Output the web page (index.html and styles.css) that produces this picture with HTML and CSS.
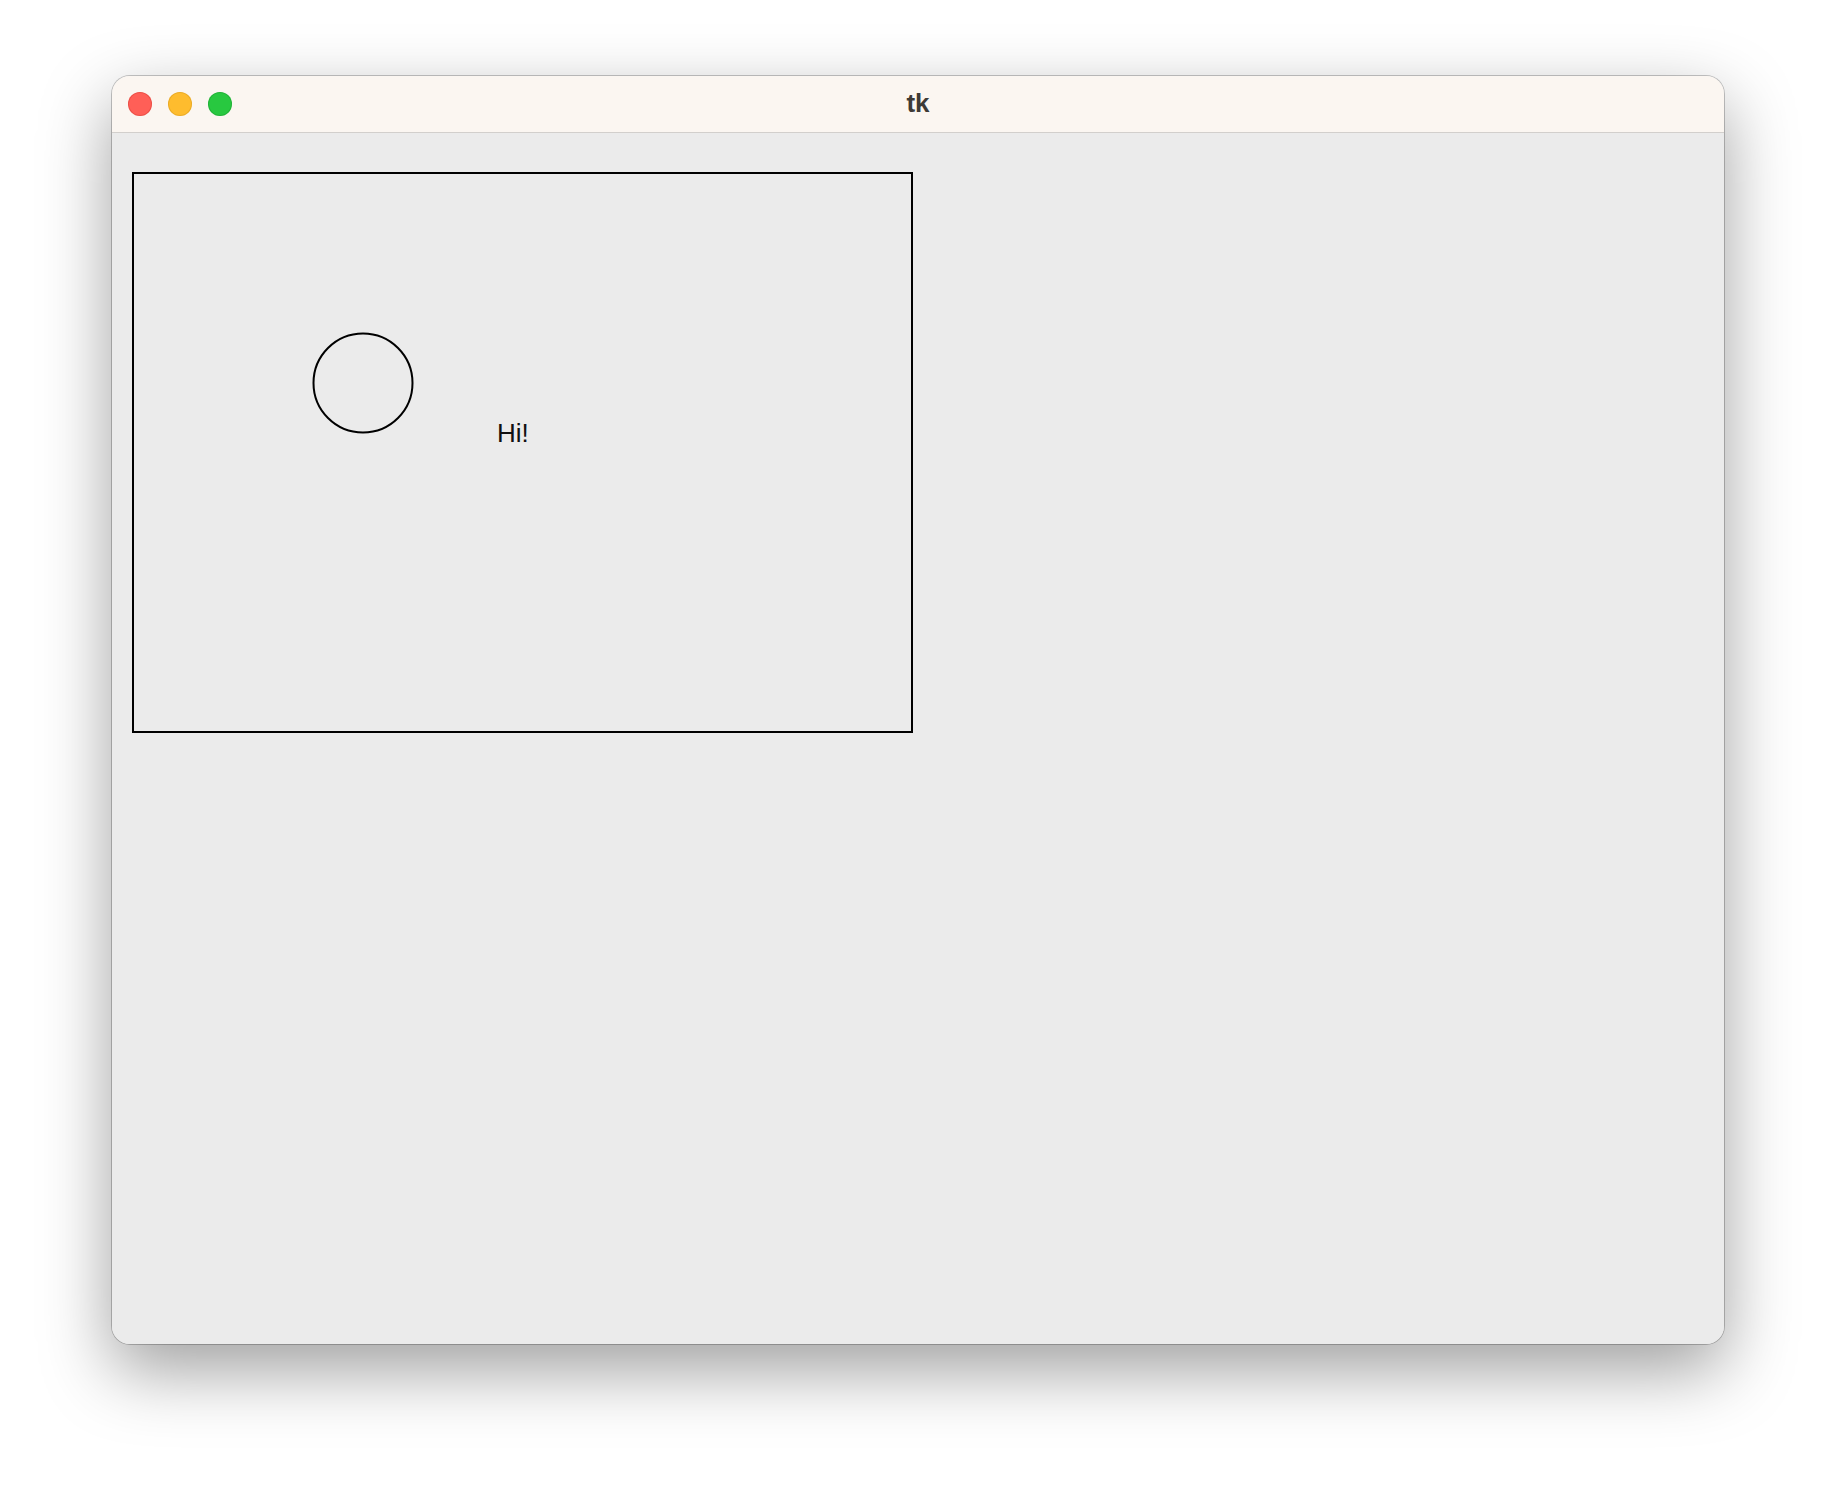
FILE: index.html
```html
<!DOCTYPE html>
<html lang="en">
<head>
<meta charset="utf-8">
<title>tk</title>
<link rel="stylesheet" href="styles.css">
</head>
<body>
<div class="window">
  <div class="titlebar">
    <div class="lights">
      <span class="light red"></span>
      <span class="light yellow"></span>
      <span class="light green"></span>
    </div>
    <div class="title">tk</div>
  </div>
  <div class="content">
    <svg class="canvas" width="781" height="561" viewBox="0 0 781 561">
      <rect x="1" y="1" width="779" height="559" fill="none" stroke="#000" stroke-width="2"/>
      <circle cx="231" cy="211" r="49.5" fill="none" stroke="#000" stroke-width="2"/>
      <text x="365" y="270" class="hi">Hi!</text>
    </svg>
  </div>
</div>
</body>
</html>
```
FILE: styles.css
```css
html, body {
  margin: 0;
  padding: 0;
  background: #ffffff;
}
body {
  width: 1836px;
  height: 1492px;
  padding: 76px 0 0 112px;
  box-sizing: border-box;
  overflow: hidden;
  font-family: "Liberation Sans", Arial, sans-serif;
}
.window {
  width: 1612px;
  height: 1268px;
  border-radius: 18px;
  background: #ebebeb;
  overflow: hidden;
  box-shadow: 0 0 0 1px rgba(0, 0, 0, 0.22), 0 26px 70px rgba(0, 0, 0, 0.38);
  display: flex;
  flex-direction: column;
}
.titlebar {
  position: relative;
  height: 56px;
  flex: 0 0 56px;
  background: #fbf6f1;
  border-bottom: 1px solid #d2cfcc;
  display: flex;
  align-items: center;
  justify-content: center;
}
.lights {
  position: absolute;
  left: 16px;
  top: 16px;
  display: flex;
  gap: 16px;
}
.light {
  width: 24px;
  height: 24px;
  border-radius: 50%;
  display: block;
}
.red { background: #ff5f57; box-shadow: inset 0 0 0 1px rgba(200, 50, 40, 0.35); }
.yellow { background: #febc2e; box-shadow: inset 0 0 0 1px rgba(200, 140, 20, 0.35); }
.green { background: #28c840; box-shadow: inset 0 0 0 1px rgba(20, 140, 40, 0.35); }
.title {
  font-family: "Liberation Sans", Arial, sans-serif;
  font-weight: bold;
  font-size: 26px;
  color: #3d3a36;
  margin-top: -1px;
}
.content {
  flex: 1;
  padding: 39px 0 0 20px;
  background: #ebebeb;
}
.canvas {
  display: block;
}
.hi {
  font-family: "Liberation Sans", Arial, sans-serif;
  font-size: 26px;
  fill: #111;
}
```
